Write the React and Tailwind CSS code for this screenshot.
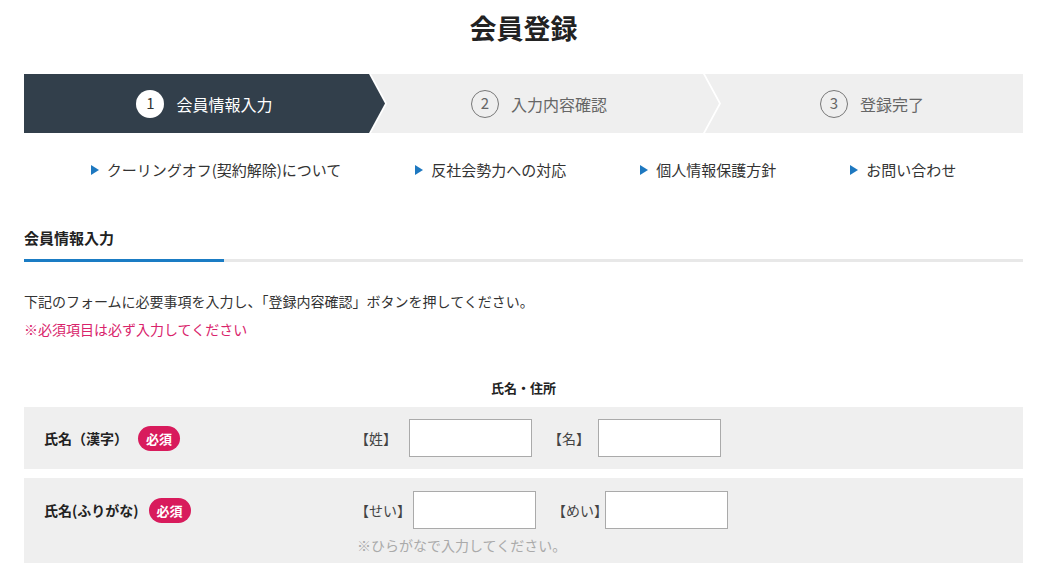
import React from "react";

const steps = [
  { no: 1, label: "会員情報入力" },
  { no: 2, label: "入力内容確認" },
  { no: 3, label: "登録完了" },
];

const links = ["クーリングオフ(契約解除)について", "反社会勢力への対応", "個人情報保護方針", "お問い合わせ"];

const Badge = () => (
  <span className="ml-[10px] inline-flex h-[25px] w-[42px] items-center justify-center rounded-full bg-[#d81b5c] text-[13px] font-bold leading-none text-white">
    必須
  </span>
);

const Field = ({ label, labelW }) => (
  <div className="flex items-center">
    <span className={`${labelW} shrink-0 text-[14px] text-[#444]`}>{label}</span>
    <input type="text" className="h-[38px] w-[123px] border border-[#aaa] bg-white outline-none" />
  </div>
);

export default function App() {
  return (
    <div className="w-[1043px] bg-white font-['Noto_Sans_CJK_JP',sans-serif] text-[#333]">
      <div className="pl-[24px] pr-[20px]">
        {/* タイトル */}
        <h1 className="pt-[10px] pb-[28px] text-center text-[27px] font-bold leading-[36px] text-[#222]">会員登録</h1>

        {/* ステップ */}
        <div className="flex h-[59px]">
          <div className="flex w-[361px] shrink-0 items-center justify-center gap-[12px] bg-[#323f4b] [clip-path:polygon(0_0,calc(100%-16px)_0,100%_50%,calc(100%-16px)_100%,0_100%)]">
            <span className="flex h-[28px] w-[28px] items-center justify-center rounded-full bg-white text-[15px] text-[#333]">1</span>
            <span className="text-[16px] text-white">{steps[0].label}</span>
          </div>
          <div className="-ml-[14px] flex w-[348px] shrink-0 items-center justify-center gap-[12px] bg-[#efefef] pr-[12px] [clip-path:polygon(0_0,calc(100%-16px)_0,100%_50%,calc(100%-16px)_100%,0_100%,16px_50%)]">
            <span className="flex h-[28px] w-[28px] items-center justify-center rounded-full border border-[#777] text-[15px] text-[#666]">2</span>
            <span className="text-[16px] text-[#666]">{steps[1].label}</span>
          </div>
          <div className="-ml-[14px] flex flex-1 items-center justify-center gap-[12px] bg-[#efefef] pl-[16px] [clip-path:polygon(0_0,100%_0,100%_100%,0_100%,16px_50%)]">
            <span className="flex h-[28px] w-[28px] items-center justify-center rounded-full border border-[#777] text-[15px] text-[#666]">3</span>
            <span className="text-[16px] text-[#666]">{steps[2].label}</span>
          </div>
        </div>

        {/* リンク */}
        <div className="flex h-[74px] items-center justify-center gap-[74px]">
          {links.map((l) => (
            <a key={l} className="flex items-center gap-[8px] text-[15px] leading-[20px] text-[#333]">
              <svg width="8" height="10" viewBox="0 0 8 10">
                <path d="M0 0L8 5L0 10Z" fill="#1e78c0" />
              </svg>
              {l}
            </a>
          ))}
        </div>

        {/* 見出し */}
        <h2 className="pt-[20px] pb-[10px] text-[15px] font-bold leading-[22px] text-[#222]">会員情報入力</h2>
        <div className="flex h-[3px] bg-[#e8e8e8]">
          <div className="w-[200px] bg-[#1a7cc4]" />
        </div>

        <p className="mt-[25px] text-[14px] leading-[28px]">
          下記のフォームに必要事項を入力し、「登録内容確認」ボタンを押してください。
        </p>
        <p className="text-[14px] leading-[28px] text-[#d9236b]">※必須項目は必ず入力してください</p>

        <div className="mt-[35px] mb-[9px] text-center text-[13px] font-bold leading-[20px] text-[#222]">氏名・住所</div>

        {/* 氏名（漢字） */}
        <div className="flex bg-[#efefef] py-[12px]">
          <div className="flex h-[38px] w-[331px] shrink-0 items-center pl-[20px] text-[14px] font-bold text-[#222]">
            氏名（漢字）
            <Badge />
          </div>
          <div className="flex items-center gap-[16px]">
            <Field label="【姓】" labelW="w-[54px]" />
            <Field label="【名】" labelW="w-[50px]" />
          </div>
        </div>

        {/* 氏名(ふりがな) */}
        <div className="mt-[9px] flex bg-[#efefef] pt-[13px] pb-[8px]">
          <div className="flex h-[38px] w-[331px] shrink-0 items-center pl-[20px] text-[14px] font-bold text-[#222]">
            氏名(ふりがな)
            <Badge />
          </div>
          <div>
            <div className="flex items-center gap-[16px]">
              <Field label="【せい】" labelW="w-[58px]" />
              <Field label="【めい】" labelW="w-[53px]" />
            </div>
            <p className="mt-[6px] pl-[2px] text-[14px] leading-[20px] text-[#aaa]">※ひらがなで入力してください。</p>
          </div>
        </div>
      </div>
    </div>
  );
}
